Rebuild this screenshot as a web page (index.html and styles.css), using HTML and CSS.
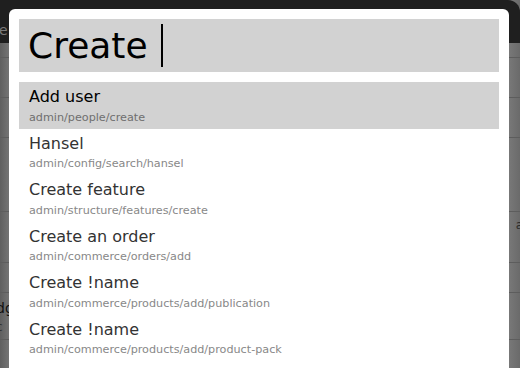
FILE: index.html
```html
<!DOCTYPE html>
<html lang="en">
<head>
    <meta charset="UTF-8">
    <title>Navigate</title>
    <link rel="stylesheet" href="styles.css">
</head>
<body>

<div class="page">
    <div class="toolbar"><span class="toolbar-text">e</span></div>
    <div class="row r1"></div>
    <div class="row r2"></div>
    <div class="row r3"></div>
    <div class="row r4"><span class="side-right">a</span></div>
    <div class="row r5"></div>
    <div class="row r6"><span class="side-left">dg<br><small>c</small></span></div>
    <div class="row r7"></div>
</div>

<div class="modal">
    <div class="search">
        <span class="search-text">Create</span><span class="caret"></span>
    </div>
    <ul class="results">
        <li class="result active">
            <div class="result-title">Add user</div>
            <div class="result-path">admin/people/create</div>
        </li>
        <li class="result">
            <div class="result-title">Hansel</div>
            <div class="result-path">admin/config/search/hansel</div>
        </li>
        <li class="result">
            <div class="result-title">Create feature</div>
            <div class="result-path">admin/structure/features/create</div>
        </li>
        <li class="result">
            <div class="result-title">Create an order</div>
            <div class="result-path">admin/commerce/orders/add</div>
        </li>
        <li class="result">
            <div class="result-title">Create !name</div>
            <div class="result-path">admin/commerce/products/add/publication</div>
        </li>
        <li class="result">
            <div class="result-title">Create !name</div>
            <div class="result-path">admin/commerce/products/add/product-pack</div>
        </li>
    </ul>
</div>

</body>
</html>
```

FILE: styles.css
```css
body {
    margin: 0;
    padding: 0;
    font-family: "DejaVu Sans", sans-serif;
    background: #8a8a8a;
    overflow: hidden;
    height: 368px;
}

/* dimmed admin page behind the overlay */
.page {
    height: 368px;
    background: linear-gradient(90deg, #5f5f5f 0px, #767676 10px, #6f6f6f 40px, #6f6f6f 490px, #777 510px, #6a6a6a 520px);
}
.toolbar {
    height: 43px;
    background: #1f1f1f;
    border-top-right-radius: 12px;
}
.toolbar-text {
    display: block;
    padding-top: 20px;
    margin-left: -1px;
    font-size: 14px;
    color: #7a7a7a;
    line-height: 20px;
}
.row {
    border-bottom: 1px solid #5d5d5d;
    position: relative;
}
.r1 { height: 14px; }
.r2 { height: 39px; }
.r3 { height: 39px; }
.r4 { height: 73px; }
.r5 { height: 50px; }
.r6 { height: 29px; }
.r7 { height: 46px; }
.side-right {
    position: absolute;
    right: -3px;
    top: 80px;
    font-size: 12px;
    color: #2a2a2a;
}
.side-left {
    position: absolute;
    left: -4px;
    top: 36px;
    font-size: 14px;
    line-height: 18px;
    color: #111;
}
.side-left small {
    font-size: 12px;
    color: #333;
}

/* overlay */
.modal {
    position: absolute;
    top: 9px;
    left: 9px;
    width: 480px;
    height: 400px;
    padding: 10px;
    background: #fff;
    border-radius: 6px 6px 0 0;
}
.search {
    height: 53px;
    background: #d2d2d2;
    display: flex;
    align-items: center;
    padding-left: 9px;
}
.search-text {
    font-size: 36px;
    line-height: 53px;
    color: #000;
}
.caret {
    width: 2px;
    height: 43px;
    margin-left: 13px;
    background: #000;
}
.results {
    list-style: none;
    margin: 10px 0 0;
    padding: 0;
}
.result {
    padding: 5px 10px 3px;
    color: #333;
}
.result.active {
    background: #d2d2d2;
    color: #000;
}
.result-title {
    font-size: 16px;
    line-height: 20px;
}
.result-path {
    font-size: 11.2px;
    line-height: 16px;
    padding-top: 2.5px;
    color: #888;
}
.result.active .result-path {
    color: #6f6f6f;
}
```
